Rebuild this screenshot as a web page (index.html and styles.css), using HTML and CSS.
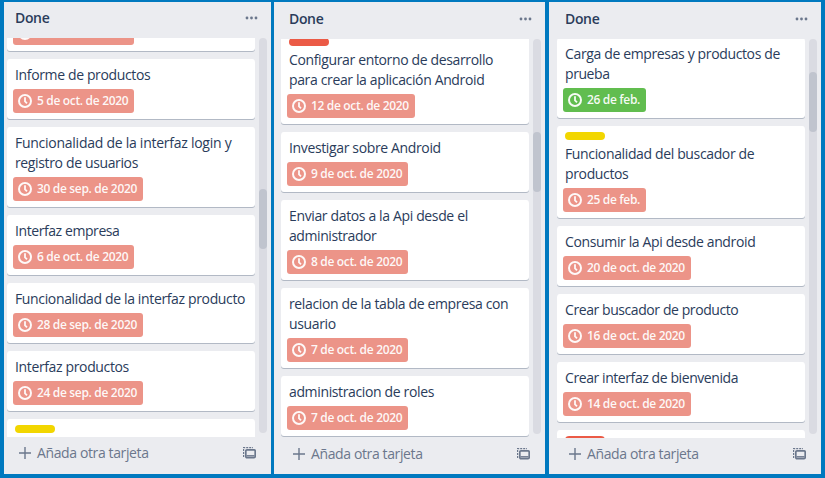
FILE: index.html
```html
<!DOCTYPE html>
<html lang="es">
<head>
<meta charset="utf-8">
<title>Tablero</title>
<link rel="stylesheet" href="styles.css">
</head>
<body>
<svg class="defs" width="0" height="0">
  <symbol id="clock" viewBox="0 0 14 14"><circle cx="7" cy="7" r="6" fill="none" stroke="currentColor" stroke-width="2"/><path d="M7 3.2V7.3L9 9.3" fill="none" stroke="currentColor" stroke-width="1.8"/></symbol>
  <symbol id="dots" viewBox="0 0 12 4"><circle cx="1.5" cy="2" r="1.4" fill="currentColor"/><circle cx="6" cy="2" r="1.4" fill="currentColor"/><circle cx="10.5" cy="2" r="1.4" fill="currentColor"/></symbol>
  <symbol id="plus" viewBox="0 0 12 12"><path d="M6 0V12M0 6H12" fill="none" stroke="currentColor" stroke-width="1.4"/></symbol>
  <symbol id="template" viewBox="0 0 13 12"><path d="M.6 10V.6H10" fill="none" stroke="currentColor" stroke-width="1.2" stroke-dasharray="2 1"/><rect x="2.8" y="2.8" width="9.4" height="7.9" rx="1.2" fill="none" stroke="currentColor" stroke-width="1.7"/><path d="M3.5 8.8h8" stroke="currentColor" stroke-width="1.4"/></symbol>
</svg>
<main class="board">
  <section class="list list-a">
    <header class="list-header"><h2>Done</h2><svg class="dots"><use href="#dots"/></svg></header>
    <div class="scroll">
      <div class="cards">
        <article class="card"><p>&nbsp;</p><span class="badge"><svg><use href="#clock"/></svg>5 de oct. de 2020</span></article>
        <article class="card"><p>Informe de productos</p><span class="badge"><svg><use href="#clock"/></svg>5 de oct. de 2020</span></article>
        <article class="card"><p><span class="loose">Funcionalidad de la interfaz login y</span><br>registro de usuarios</p><span class="badge"><svg><use href="#clock"/></svg>30 de sep. de 2020</span></article>
        <article class="card"><p class="tight">Interfaz empresa</p><span class="badge"><svg><use href="#clock"/></svg>6 de oct. de 2020</span></article>
        <article class="card"><p>Funcionalidad de la interfaz producto</p><span class="badge"><svg><use href="#clock"/></svg>28 de sep. de 2020</span></article>
        <article class="card"><p>Interfaz productos</p><span class="badge"><svg><use href="#clock"/></svg>24 de sep. de 2020</span></article>
        <article class="card"><i class="label yellow"></i></article>
      </div>
      <div class="track"><div class="thumb"></div></div>
    </div>
    <footer class="list-footer"><svg class="plus"><use href="#plus"/></svg><span>Añada otra tarjeta</span><svg class="template"><use href="#template"/></svg></footer>
  </section>
  <section class="list list-b">
    <header class="list-header"><h2>Done</h2><svg class="dots"><use href="#dots"/></svg></header>
    <div class="scroll">
      <div class="cards">
        <article class="card"><i class="label red"></i><p>Configurar entorno de desarrollo<br>para crear la aplicación Android</p><span class="badge"><svg><use href="#clock"/></svg>12 de oct. de 2020</span></article>
        <article class="card"><p>Investigar sobre Android</p><span class="badge"><svg><use href="#clock"/></svg>9 de oct. de 2020</span></article>
        <article class="card"><p>Enviar datos a la Api desde el<br><span class="tight">administrador</span></p><span class="badge"><svg><use href="#clock"/></svg>8 de oct. de 2020</span></article>
        <article class="card"><p>relacion de la tabla de empresa con<br>usuario</p><span class="badge"><svg><use href="#clock"/></svg>7 de oct. de 2020</span></article>
        <article class="card"><p>administracion de roles</p><span class="badge"><svg><use href="#clock"/></svg>7 de oct. de 2020</span></article>
      </div>
      <div class="track"><div class="thumb"></div></div>
    </div>
    <footer class="list-footer"><svg class="plus"><use href="#plus"/></svg><span>Añada otra tarjeta</span><svg class="template"><use href="#template"/></svg></footer>
  </section>
  <section class="list list-c">
    <header class="list-header"><h2>Done</h2><svg class="dots"><use href="#dots"/></svg></header>
    <div class="scroll">
      <div class="cards">
        <article class="card"><p>Carga de empresas y productos de<br><span class="tight">prueba</span></p><span class="badge green"><svg><use href="#clock"/></svg>26 de feb.</span></article>
        <article class="card"><i class="label yellow"></i><p>Funcionalidad del buscador de<br>productos</p><span class="badge"><svg><use href="#clock"/></svg>25 de feb.</span></article>
        <article class="card"><p>Consumir la Api desde android</p><span class="badge"><svg><use href="#clock"/></svg>20 de oct. de 2020</span></article>
        <article class="card"><p class="tight">Crear buscador de producto</p><span class="badge"><svg><use href="#clock"/></svg>16 de oct. de 2020</span></article>
        <article class="card"><p class="tight">Crear interfaz de bienvenida</p><span class="badge"><svg><use href="#clock"/></svg>14 de oct. de 2020</span></article>
        <article class="card"><i class="label red"></i></article>
      </div>
      <div class="track"><div class="thumb"></div></div>
    </div>
    <footer class="list-footer"><svg class="plus"><use href="#plus"/></svg><span>Añada otra tarjeta</span><svg class="template"><use href="#template"/></svg></footer>
  </section>
</main>
</body>
</html>
```
FILE: styles.css
```css
* { box-sizing: border-box; }
body { margin: 0; background: #0079bf; font: 14px/20px "Open Sans", "Noto Sans", sans-serif; color: #172b4d; overflow: hidden; }
svg { display: block; flex: none; }
.defs { position: absolute; }
.board { display: grid; grid-template-columns: 267px 271px 273px; column-gap: 3px; padding: 2px 4px; height: 476px; }
.list { display: flex; flex-direction: column; height: 472px; background: #ebecf0; overflow: hidden; padding-left: 3px; }
.list-b { padding-left: 7px; }
.list-c { margin-left: 1px; width: 272px; padding-left: 8px; }
.list-header { display: flex; justify-content: space-between; width: 251px; height: 37px; padding: 7px 0 0 8px; flex: none; }
.list-a .list-header { height: 36px; padding-top: 6px; }
h2 { margin: 0; font-size: 14px; line-height: 20px; font-weight: 600; letter-spacing: -.35px; color: #2a3c5b; }
.dots { width: 13px; height: 4px; color: #6b778c; margin-top: 8px; }
.scroll { display: flex; gap: 4px; height: 399px; flex: none; }
.cards { width: 248px; height: 399px; overflow: hidden; }
.card { background: #fff; border-radius: 3px; box-shadow: 0 1px 0 rgba(9, 30, 66, .25); padding: 6px; margin-bottom: 8px; }
.list-a .card:first-child { margin-top: -47px; }
.list-b .card:first-child { margin-top: -7px; }
.list-c .card:first-child { margin-top: -1px; }
.card p { margin: 0 0 4px; padding-left: 2px; letter-spacing: -.36px; white-space: nowrap; color: #2a3c5b; }
.card .loose { letter-spacing: -.26px; }
.card p.tight, .card .tight { letter-spacing: -.42px; }
.label { display: block; width: 40px; height: 8px; border-radius: 4px; margin: 0 0 4px 2px; }
.yellow { background: #f2d600; }
.red { background: #eb5a46; }
.badge { display: flex; align-items: center; gap: 5px; width: max-content; height: 24px; padding: 0 6px 0 5px; border-radius: 3px; background: #ec9488; color: rgba(255, 255, 255, .94); font-size: 12px; font-weight: 600; letter-spacing: -.33px; }
.badge svg { width: 14px; height: 14px; margin-top: -1px; }
.badge.green { background: #61bd4f; }
.track { width: 8px; height: 395px; border-radius: 4px; background: #dadbe2; overflow: hidden; }
.thumb { height: 60px; border-radius: 4px; background: #c0c4ce; }
.list-a .thumb { margin-top: 151px; }
.list-b .thumb { margin-top: 93px; }
.list-c .thumb { margin-top: 33px; }
.list-footer { display: flex; align-items: center; width: 249px; height: 32px; padding-left: 12px; color: #6b778c; }
.list-footer span { margin-left: 6px; letter-spacing: -.38px; }
.plus { width: 12px; height: 12px; }
.template { width: 13px; height: 12px; margin-left: auto; }
```
